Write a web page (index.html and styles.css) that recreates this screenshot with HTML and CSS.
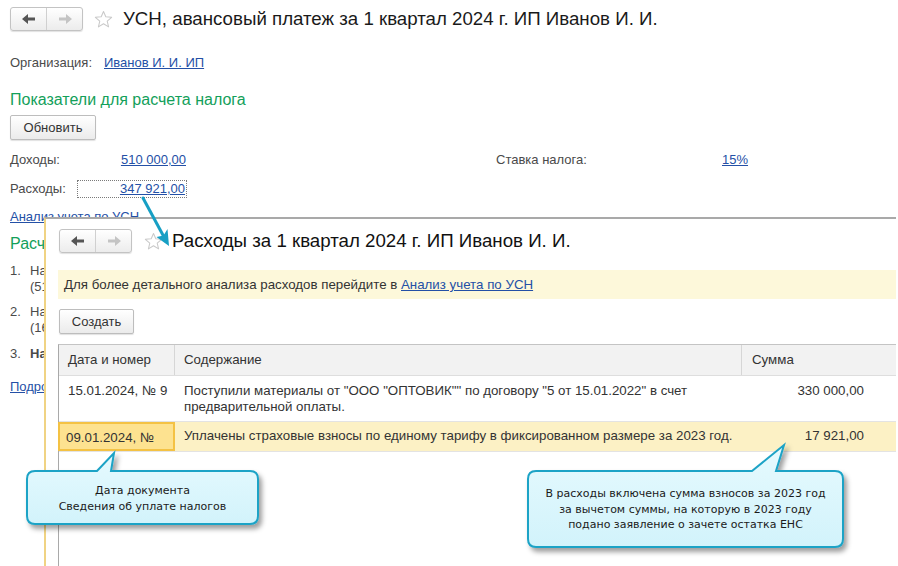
FILE: index.html
```html
<!DOCTYPE html>
<html lang="ru">
<head>
<meta charset="utf-8">
<title>УСН</title>
<link rel="stylesheet" href="styles.css">
</head>
<body>
<div class="main">
  <div class="toolbar">
    <div class="nav">
      <span class="navbtn"><svg width="14" height="10" viewBox="0 0 14 10"><path d="M0 5 L6 0 L6 3.6 L13 3.6 L13 6.4 L6 6.4 L6 10 Z" fill="#555"/></svg></span>
      <span class="navbtn"><svg width="14" height="10" viewBox="0 0 14 10"><path d="M14 5 L8 0 L8 3.6 L1 3.6 L1 6.4 L8 6.4 L8 10 Z" fill="#c4c4c4"/></svg></span>
    </div>
    <svg class="star" width="19" height="19" viewBox="0 0 24 24"><path d="M12 1.8 L14.9 8.6 L22.3 9.2 L16.7 14 L18.4 21.3 L12 17.4 L5.6 21.3 L7.3 14 L1.7 9.2 L9.1 8.6 Z" fill="none" stroke="#c9c9c9" stroke-width="1.3" stroke-linejoin="round"/></svg>
    <h1 class="title">УСН, авансовый платеж за 1 квартал 2024 г. ИП Иванов И. И.</h1>
  </div>
  <div class="org"><span class="org-label">Организация:</span><a class="link" href="#">Иванов И. И. ИП</a></div>
  <h2 class="group">Показатели для расчета налога</h2>
  <button class="btn btn-refresh">Обновить</button>
  <div class="frow frow-first">
    <span class="flabel">Доходы:</span>
    <span class="fval"><a class="link" href="#">510 000,00</a></span>
    <span class="flabel2">Ставка налога:</span>
    <a class="link" href="#">15%</a>
  </div>
  <div class="frow">
    <span class="flabel">Расходы:</span>
    <span class="fval fval-focus"><a class="link" href="#">347 921,00</a></span>
  </div>
  <a class="link analysis" href="#">Анализ учета по УСН</a>
  <h2 class="group group-calc">Расчет налога</h2>
  <ol class="calc">
    <li class="calc-item"><span class="num">1.</span><span>Налоговая база<br>(510 000,00 - 347 921,00)</span></li>
    <li class="calc-item"><span class="num">2.</span><span>Налог по ставке 15%<br>(162 079,00 x 15%)</span></li>
    <li class="calc-item bold"><span class="num">3.</span><span>Налог к уплате</span></li>
  </ol>
  <a class="link more" href="#">Подробнее</a>
</div>

<div class="win">
  <div class="toolbar win-toolbar">
    <div class="nav">
      <span class="navbtn"><svg width="14" height="10" viewBox="0 0 14 10"><path d="M0 5 L6 0 L6 3.6 L13 3.6 L13 6.4 L6 6.4 L6 10 Z" fill="#555"/></svg></span>
      <span class="navbtn"><svg width="14" height="10" viewBox="0 0 14 10"><path d="M14 5 L8 0 L8 3.6 L1 3.6 L1 6.4 L8 6.4 L8 10 Z" fill="#c4c4c4"/></svg></span>
    </div>
    <svg class="star win-star" width="19" height="19" viewBox="0 0 24 24"><path d="M12 1.8 L14.9 8.6 L22.3 9.2 L16.7 14 L18.4 21.3 L12 17.4 L5.6 21.3 L7.3 14 L1.7 9.2 L9.1 8.6 Z" fill="none" stroke="#c9c9c9" stroke-width="1.3" stroke-linejoin="round"/></svg>
    <h1 class="title win-title">Расходы за 1 квартал 2024 г. ИП Иванов И. И.</h1>
  </div>
  <div class="info">Для более детального анализа расходов перейдите в <a class="link" href="#">Анализ учета по УСН</a></div>
  <button class="btn btn-create">Создать</button>
  <div class="table">
    <div class="trow thead">
      <div class="cell c-date">Дата и номер</div>
      <div class="cell c-text">Содержание</div>
      <div class="cell c-sum">Сумма</div>
    </div>
    <div class="trow">
      <div class="cell c-date">15.01.2024, № 9</div>
      <div class="cell c-text">Поступили материалы от "ООО "ОПТОВИК"" по договору "5 от 15.01.2022" в счет<br>предварительной оплаты.</div>
      <div class="cell c-sum num-right">330 000,00</div>
    </div>
    <div class="trow row-sel">
      <div class="cell c-date cell-sel">09.01.2024, №</div>
      <div class="cell c-text">Уплачены страховые взносы по единому тарифу в фиксированном размере за 2023 год.</div>
      <div class="cell c-sum num-right">17 921,00</div>
    </div>
  </div>
</div>

<svg class="annot" width="898" height="566" viewBox="0 0 898 566">
  <defs>
    <filter id="sh" x="-10%" y="-20%" width="130%" height="150%">
      <feDropShadow dx="3" dy="4" stdDeviation="2.5" flood-color="#000" flood-opacity="0.38"/>
    </filter>
    <linearGradient id="cg" x1="0" y1="0" x2="0" y2="1">
      <stop offset="0" stop-color="#e6fafe"/>
      <stop offset="1" stop-color="#d2f3fb"/>
    </linearGradient>
  </defs>
  <line x1="143" y1="198" x2="164" y2="237" stroke="#179fc4" stroke-width="3" stroke-linecap="round"/>
  <path d="M169 246 L156.5 237 L163.5 235.5 L167.5 229 Z" fill="#179fc4"/>
  <path filter="url(#sh)" d="M35 471 L97 471 L114 453 L111 471 L250 471 Q258 471 258 479 L258 516 Q258 524 250 524 L35 524 Q27 524 27 516 L27 479 Q27 471 35 471 Z" fill="url(#cg)" stroke="#1da3c6" stroke-width="2"/>
  <path filter="url(#sh)" d="M536 471 L752 471 L784 445 L776 471 L835 471 Q843 471 843 479 L843 539 Q843 547 835 547 L536 547 Q528 547 528 539 L528 479 Q528 471 536 471 Z" fill="url(#cg)" stroke="#1da3c6" stroke-width="2"/>
</svg>
<div class="callout-text ct1">Дата документа<br>Сведения об уплате налогов</div>
<div class="callout-text ct2">В расходы включена сумма взносов за 2023 год<br>за вычетом суммы, на которую в 2023 году<br>подано заявление о зачете остатка ЕНС</div>
</body>
</html>
```

FILE: styles.css
```css
html, body {
  margin: 0;
  padding: 0;
  background: #fff;
}
body {
  width: 898px;
  height: 566px;
  overflow: hidden;
  position: relative;
  font-family: "Liberation Sans", Arial, sans-serif;
  font-size: 13px;
  color: #4a4a4a;
}
.main {
  padding: 7px 10px 0 10px;
}
.toolbar {
  display: flex;
  align-items: center;
  height: 24px;
}
.nav {
  display: flex;
  width: 71px;
  height: 22px;
  border: 1px solid #c3c3c3;
  border-radius: 3px;
  background: linear-gradient(#ffffff, #ececec);
  box-shadow: 0 1px 1px rgba(0,0,0,0.12);
}
.navbtn {
  flex: 1;
  display: flex;
  align-items: center;
  justify-content: center;
}
.navbtn + .navbtn {
  border-left: 1px solid #d0d0d0;
}
.star {
  margin-left: 11px;
  flex: none;
}
.title {
  margin: 0 0 0 10px;
  font-size: 18.7px;
  font-weight: normal;
  color: #1a1a1a;
  line-height: 24px;
  white-space: nowrap;
}
.link {
  color: #2450a6;
  text-decoration: underline;
}
.org {
  margin-top: 24px;
  line-height: 16px;
  display: flex;
}
.org-label {
  width: 94px;
}
.group {
  margin: 19px 0 0 0;
  font-size: 16px;
  font-weight: normal;
  line-height: 20px;
  color: #13a05a;
}
.btn {
  display: block;
  font-family: "Liberation Sans", Arial, sans-serif;
  font-size: 13px;
  color: #333;
  height: 25px;
  padding: 0;
  border: 1px solid #bdbdbd;
  border-radius: 2px;
  background: linear-gradient(#ffffff, #ebebeb);
  box-shadow: 0 1px 1px rgba(0,0,0,0.12);
}
.btn-refresh {
  margin-top: 5px;
  width: 86px;
}
.frow {
  display: flex;
  line-height: 18px;
  height: 18px;
  margin-top: 11px;
}
.flabel {
  width: 67px;
}
.fval {
  width: 110px;
  text-align: right;
  box-sizing: border-box;
  padding-right: 1px;
}
.fval-focus {
  border: 1px dotted #7a7a7a;
  line-height: 16px;
}
.flabel2 {
  margin-left: 309px;
  width: 226px;
}
.analysis {
  display: block;
  margin-top: 11px;
  line-height: 16px;
  width: max-content;
}
.group-calc {
  margin-top: 9px;
}
.calc {
  list-style: none;
  margin: 0;
  padding: 0;
}
.calc-item {
  display: flex;
  line-height: 16px;
  margin-top: 9px;
}
.calc-item.bold {
  font-weight: bold;
  margin-top: 10px;
}
.num {
  width: 20px;
  font-weight: normal;
}
.more {
  display: block;
  margin-top: 17px;
  line-height: 16px;
  width: max-content;
}

/* overlay window */
.win {
  position: absolute;
  left: 44px;
  top: 217px;
  width: 852px;
  bottom: 0;
  background: #fff;
  border-top: 2px solid #a9a9a9;
  border-left: 2px solid #f0d383;
  padding: 10px 0 0 12px;
  box-sizing: border-box;
  display: flex;
  flex-direction: column;
  z-index: 2;
  font-size: 13.3px;
}
.win-toolbar {
  padding-left: 1px;
}
.win-star {
  margin-left: 12px;
}
.win-title {
  font-size: 18.7px;
  margin-left: 9px;
  color: #111;
}
.info {
  margin-top: 17px;
  height: 29px;
  line-height: 29px;
  background: #fdf8da;
  padding-left: 6px;
  color: #333;
}
.btn-create {
  margin-top: 10px;
  margin-left: 1px;
  width: 75px;
}
.table {
  margin-top: 10px;
  flex: 1;
  border-left: 1px solid #a9a9a9;
  border-top: 1px solid #c4c4c4;
  color: #333;
}
.trow {
  display: flex;
  border-bottom: 1px solid #e3e3e3;
}
.thead {
  background: #f2f2f2;
  height: 30px;
  align-items: center;
  border-bottom: 1px solid #dedede;
}
.thead .cell {
  height: 30px;
  line-height: 30px;
  padding-top: 0;
  padding-bottom: 0;
}
.thead .c-date, .thead .c-text {
  border-right: 1px solid #d6d6d6;
}
.cell {
  box-sizing: border-box;
  line-height: 16px;
  padding: 7px 0 6px 9px;
  white-space: nowrap;
}
.c-date { width: 116px; }
.c-text { width: 567px; }
.c-sum { flex: 1; padding-left: 10px; }
.num-right {
  text-align: right;
  padding-right: 32px;
}
.row-sel {
  background: #fcf1c5;
  height: 29px;
}
.row-sel .cell {
  padding-top: 6px;
  padding-bottom: 6px;
}
.cell-sel {
  background: #fde290;
  border: 2px solid #f4c244;
  padding: 4px 0 4px 6px;
  margin-left: -1px;
  width: 117px;
}

/* annotations */
.annot {
  position: absolute;
  left: 0;
  top: 0;
  z-index: 3;
  pointer-events: none;
}
.callout-text {
  position: absolute;
  z-index: 4;
  display: flex;
  align-items: center;
  justify-content: center;
  text-align: center;
  font-family: "DejaVu Sans", Verdana, sans-serif;
  font-size: 11px;
  color: #1a1a1a;
}
.ct1 {
  left: 27px;
  top: 473px;
  width: 231px;
  height: 52px;
  line-height: 16px;
}
.ct2 {
  left: 528px;
  top: 472px;
  width: 315px;
  height: 75px;
  line-height: 15.5px;
}
```
